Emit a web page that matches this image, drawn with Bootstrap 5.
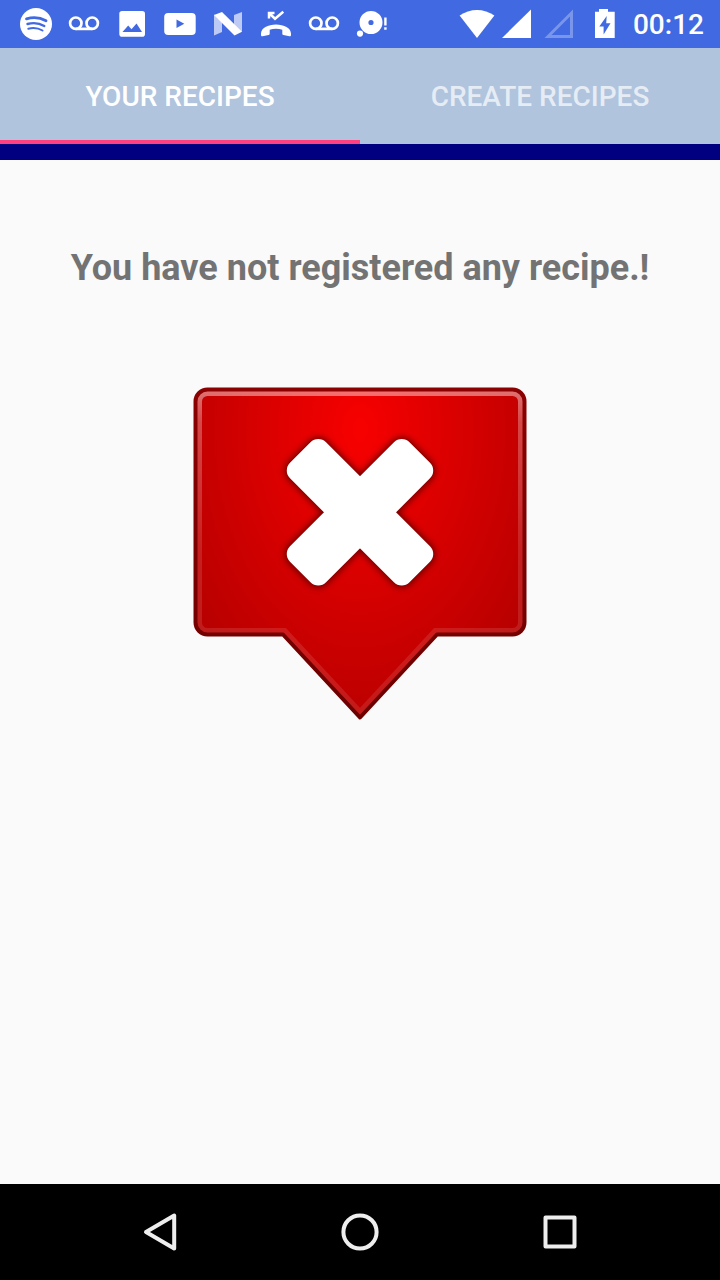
<!DOCTYPE html>
<html lang="en">
<head>
<meta charset="utf-8">
<meta name="viewport" content="width=device-width, initial-scale=1">
<title>Your Recipes</title>
<link href="https://cdn.jsdelivr.net/npm/bootstrap@5.3.0/dist/css/bootstrap.min.css" rel="stylesheet">
<style>
  body { font-family: Roboto, "Liberation Sans", sans-serif; background: #fafafa; }
  .status-bar { background: #4169e1; height: 48px; color: #fff; }
  .clock { font-size: 28px; line-height: 50px; font-weight: 500; margin-left: 6px; }
  .recipe-tabs { background: #b0c4de; border-bottom: 16px solid #000080; }
  .recipe-tabs .nav-link {
    height: 96px; padding: 6px 0 0; border-radius: 0;
    background: transparent;
    border: 0; border-bottom: 4px solid transparent;
    font-size: 28px; line-height: 32px; font-weight: 500;
    color: rgba(255, 255, 255, .7);
  }
  .recipe-tabs .nav-link.active { color: #fff; border-bottom-color: #ff4081; }
  .empty-state { padding-top: 86px; }
  .empty-title { font-size: 36px; line-height: 44px; color: #737373; margin-bottom: 96px; }
  .system-nav { height: 96px; }
  .system-keys { max-width: 600px; }
</style>
</head>
<body class="d-flex flex-column min-vh-100">

<header>
  <div class="status-bar d-flex justify-content-between">
    <div class="d-flex ms-1 ps-2">
      <svg width="48" height="48" viewBox="0 0 48 48" fill="none" aria-hidden="true">
        <circle cx="24" cy="24" r="16" fill="#fff"/>
        <g stroke="#4169e1" stroke-linecap="round">
          <path d="M14.500 18.800C20.500 17 28.500 17.600 34 20.700" stroke-width="2.800"/>
          <path d="M15.500 24C21 22.500 27.500 23.200 32.300 26" stroke-width="2.400"/>
          <path d="M16.300 28.700C21.300 27.600 26.300 28.100 30.500 30.500" stroke-width="2"/>
        </g>
      </svg>
      <svg width="48" height="48" viewBox="0 0 48 48" fill="none" stroke="#fff" stroke-width="2.700" aria-hidden="true">
        <circle cx="15.800" cy="23.200" r="5.700"/><circle cx="32.200" cy="23.200" r="5.700"/><path d="M15.800 28.900H32.200"/>
      </svg>
      <svg width="48" height="48" viewBox="0 0 48 48" aria-hidden="true">
        <rect x="11.300" y="11" width="25.700" height="25.700" rx="2.800" fill="#fff"/>
        <path d="M14.500 32L20.200 25.600L23.500 29.300L28.500 23.500L34 32Z" fill="#4169e1"/>
      </svg>
      <svg width="48" height="48" viewBox="0 0 48 48" aria-hidden="true">
        <rect x="8.200" y="13" width="31.500" height="22" rx="4" fill="#fff"/>
        <path d="M20.500 19.500L28.300 23.800L20.500 28Z" fill="#4169e1"/>
      </svg>
      <svg width="48" height="48" viewBox="0 0 48 48" fill="#fff" aria-hidden="true">
        <path d="M10 14.500L18 19V32L10 35.500ZM30 15L38 12V32L30 27Z" opacity=".65"/>
        <path d="M10 15L18 12L38 31.700L30.500 35.500Z"/>
      </svg>
      <svg width="48" height="48" viewBox="0 0 48 48" aria-hidden="true">
        <path d="M9 33.500C9 28 16 24.400 24 24.400S39 28 39 33.500V35C39 36 38.300 36.500 37.300 36.200L31.500 35C30.700 34.800 30.300 34.200 30.300 33.400V29.700C26.500 28.500 21.500 28.500 17.700 29.700V33.400C17.700 34.200 17.300 34.800 16.500 35L10.700 36.200C9.700 36.500 9 36 9 35Z" fill="#fff"/>
        <path d="M17 18.500V13H22.500M17 13L23 18.700L31.300 11.700" fill="none" stroke="#fff" stroke-width="2.500"/>
      </svg>
      <svg width="48" height="48" viewBox="0 0 48 48" fill="none" stroke="#fff" stroke-width="2.700" aria-hidden="true">
        <circle cx="15.800" cy="23.200" r="5.700"/><circle cx="32.200" cy="23.200" r="5.700"/><path d="M15.800 28.900H32.200"/>
      </svg>
      <svg width="48" height="48" viewBox="0 0 48 48" fill="#fff" aria-hidden="true">
        <path fill-rule="evenodd" d="M11.500 22.500a11.500 11.500 0 1 0 23 0a11.500 11.500 0 1 0-23 0ZM20.400 22.500a2.600 2.600 0 1 0 5.200 0a2.600 2.600 0 1 0-5.200 0Z"/>
        <circle cx="12" cy="33.600" r="3.100"/>
        <path d="M36.200 17.500H38.600V25.500H36.200ZM36.200 27.300H38.600V29.700H36.200Z"/>
      </svg>
    </div>
    <div class="d-flex me-3">
      <svg width="42" height="48" viewBox="0 0 42 48" fill="#fff" aria-hidden="true">
        <path d="M0.600 15.600C11 8 25 8 35.400 15.600L18 38Z"/>
      </svg>
      <svg width="42" height="48" viewBox="0 0 42 48" fill="#fff" aria-hidden="true"><path d="M1 38L30 9.500V38Z"/></svg>
      <svg width="42" height="48" viewBox="0 0 42 48" fill="#fff" opacity=".3" aria-hidden="true">
        <path fill-rule="evenodd" d="M1.500 38L30 9.500V38ZM8.500 35H27V16.500Z"/>
      </svg>
      <svg width="42" height="48" viewBox="0 0 42 48" aria-hidden="true">
        <path d="M14 9H23V11.800H29.700V38H10V11.800H14Z" fill="#fff"/>
        <path d="M21.700 16L14.300 26.600H18.600V34.500L25.500 23.200H21.200Z" fill="#4169e1"/>
      </svg>
      <time class="clock">00:12</time>
    </div>
  </div>

  <ul class="nav recipe-tabs row g-0" role="tablist">
    <li class="col-6" role="presentation"><button class="nav-link active w-100 text-uppercase" type="button" role="tab" aria-selected="true">Your recipes</button></li>
    <li class="col-6" role="presentation"><button class="nav-link w-100 text-uppercase" type="button" role="tab" aria-selected="false">Create recipes</button></li>
  </ul>
</header>

<main class="empty-state flex-grow-1 text-center">
  <h1 class="empty-title fw-bold">You have not registered any recipe.!</h1>
  <svg width="336" height="336" viewBox="192 386 336 336" role="img" aria-label="No recipes">
    <defs>
      <radialGradient id="redFill" gradientUnits="userSpaceOnUse" cx="0" cy="0" r="210" gradientTransform="translate(360 430) scale(1 1.5)">
        <stop offset="0" stop-color="#f80000"/><stop offset="1" stop-color="#b60000"/>
      </radialGradient>
      <linearGradient id="edgeShine" gradientUnits="userSpaceOnUse" x1="0" y1="390" x2="0" y2="718">
        <stop offset="0" stop-color="#fff" stop-opacity=".45"/>
        <stop offset=".1" stop-color="#fff" stop-opacity=".28"/>
        <stop offset=".5" stop-color="#fff" stop-opacity=".12"/>
        <stop offset="1" stop-color="#fff" stop-opacity=".1"/>
      </linearGradient>
      <linearGradient id="darkEdge" gradientUnits="userSpaceOnUse" x1="0" y1="388" x2="0" y2="720">
        <stop offset="0" stop-color="#8c0000"/><stop offset="1" stop-color="#6c0000"/>
      </linearGradient>
      <path id="bubble" d="M207.500 389.500H512.500A12 12 0 0 1 524.500 401.500V622.500A12 12 0 0 1 512.500 634.500H437L360 717.500L283 634.500H207.500A12 12 0 0 1 195.500 622.500V401.500A12 12 0 0 1 207.500 389.500Z"/>
      <clipPath id="bubbleClip"><use href="#bubble"/></clipPath>
      <filter id="soft" x="-20%" y="-20%" width="140%" height="140%"><feGaussianBlur stdDeviation="3"/></filter>
      <g id="cross">
        <rect x="-84.500" y="-25.500" width="169" height="51" rx="11"/>
        <rect x="-25.500" y="-84.500" width="51" height="169" rx="11"/>
      </g>
    </defs>
    <use href="#bubble" fill="url(#redFill)"/>
    <use href="#bubble" fill="none" stroke="url(#edgeShine)" stroke-width="13" clip-path="url(#bubbleClip)"/>
    <use href="#bubble" fill="none" stroke="url(#darkEdge)" stroke-width="4" stroke-linejoin="round"/>
    <g transform="translate(360 512.300) rotate(45)">
      <use href="#cross" fill="#700000" stroke="#700000" stroke-width="4" filter="url(#soft)"/>
      <use href="#cross" fill="#fff"/>
    </g>
  </svg>
</main>

<footer class="system-nav bg-black d-flex justify-content-center">
  <div class="system-keys d-flex w-100">
    <button class="btn border-0 p-0 flex-fill" type="button" aria-label="Back">
      <svg width="48" height="48" viewBox="0 0 48 48" fill="none" stroke="#eee" stroke-width="4" stroke-linejoin="round"><path d="M10 24L38.200 7.500V40.500Z"/></svg>
    </button>
    <button class="btn border-0 p-0 flex-fill" type="button" aria-label="Home">
      <svg width="48" height="48" viewBox="0 0 48 48" fill="none" stroke="#eee" stroke-width="4"><circle cx="24" cy="24" r="16.600"/></svg>
    </button>
    <button class="btn border-0 p-0 flex-fill" type="button" aria-label="Recent apps">
      <svg width="48" height="48" viewBox="0 0 48 48" fill="none" stroke="#eee" stroke-width="4" stroke-linejoin="round"><rect x="9.500" y="9.500" width="29" height="29"/></svg>
    </button>
  </div>
</footer>

<script src="https://cdn.jsdelivr.net/npm/bootstrap@5.3.0/dist/js/bootstrap.bundle.min.js"></script>
</body>
</html>
